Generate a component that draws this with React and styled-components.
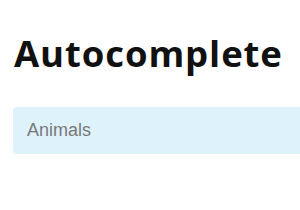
import React from 'react'
import styled, { createGlobalStyle } from 'styled-components'

const GlobalStyle = createGlobalStyle`
  html, body {
    margin: 0;
    padding: 0;
    background: #fff;
    overflow: hidden;
  }
`

const Page = styled.div`
  box-sizing: border-box;
  padding: 0 0 0 13px;
  width: 100%;
`

const Heading = styled.h1`
  margin: 0;
  padding: 28px 0 0 1px;
  font-family: "Open Sans", sans-serif;
  font-weight: 700;
  font-size: 36.5px;
  letter-spacing: 0.9px;
  line-height: 50px;
  white-space: nowrap;
  color: #111;
`

// the field runs on past the right edge of the frame
const SearchInput = styled.input`
  display: block;
  box-sizing: border-box;
  margin-top: 29px;
  width: 100%;
  height: 47px;
  padding: 0 14px;
  border: none;
  border-radius: 4px 0 0 4px;
  background: #def2fb;
  font-family: "Liberation Sans", Arial, sans-serif;
  font-size: 18px;
  color: #333;
  outline: none;

  &::placeholder {
    color: #787878;
  }
`

export default function App() {
  return (
    <>
      <GlobalStyle />
      <Page>
        <Heading>Autocomplete</Heading>
        <SearchInput placeholder="Animals" />
      </Page>
    </>
  )
}
